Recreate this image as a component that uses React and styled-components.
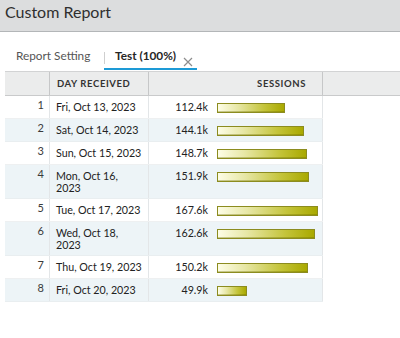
import React from "react";
import styled, { createGlobalStyle } from "styled-components";

const Global = createGlobalStyle`
  html, body { margin: 0; padding: 0; background: #ffffff; }
  body { font-family: Lato, "Open Sans", sans-serif; color: #333; }
  * { box-sizing: border-box; }
`;

const Page = styled.div`
  width: 400px;
  height: 338px;
  overflow: hidden;
  background: #fff;
`;

const TitleBar = styled.div`
  height: 32px;
  padding: 1px 0 0 5px;
  background: #dcddde;
  border-bottom: 1px solid #b3b6b8;
  font-size: 16px;
  line-height: 22px;
  color: #2f2f2f;
`;

const TabStrip = styled.div`
  display: flex;
  align-items: flex-start;
  padding: 16px 0 0 16px;
`;

const Tab = styled.div`
  display: flex;
  align-items: flex-start;
  height: 22px;
  width: ${(p) => (p.$width ? `${p.$width}px` : "auto")};
  padding-right: ${(p) => (p.$active ? "4px" : "0")};
  border-bottom: 2px solid ${(p) => (p.$active ? "#1d9ad6" : "transparent")};
  font-size: 11.8px;
  line-height: 16px;
  font-weight: ${(p) => (p.$active ? 700 : 400)};
  color: ${(p) => (p.$active ? "#262626" : "#555")};
  white-space: nowrap;
`;

const Divider = styled.span`
  width: 1px;
  height: 12px;
  margin: 4px 10px 0 0;
  background: #cfcfcf;
`;

const CloseIcon = styled.svg`
  margin: 9px 0 0 7px;
  flex: none;
`;

const Grid = styled.div`
  margin-top: 1px;
`;

const HeadRow = styled.div`
  display: flex;
  height: 25px;
  margin-left: 5px;
  background: #ebecec;
  border-top: 1px solid #d2d3d4;
  border-bottom: 1px solid #c9cacb;
`;

const HeadCell = styled.div`
  width: ${(p) => p.$w}px;
  flex: ${(p) => (p.$fill ? "1" : "none")};
  display: flex;
  align-items: center;
  justify-content: ${(p) => (p.$right ? "flex-end" : "flex-start")};
  padding: ${(p) => (p.$right ? "0 16px 0 0" : "0 0 0 7px")};
  border-right: ${(p) => (p.$fill ? "none" : "1px solid #c6c7c8")};
  font-size: 9.5px;
  font-weight: 700;
  letter-spacing: 0.6px;
  color: #333;
  white-space: nowrap;
`;

const Row = styled.div`
  display: flex;
  width: 318px;
  margin-left: 5px;
  background: ${(p) => (p.$alt ? "#edf4f7" : "#ffffff")};
  border-bottom: 1px solid ${(p) => (p.$alt ? "#e9eef0" : "#eef0f1")};
`;

const Cell = styled.div`
  flex: none;
  width: ${(p) => p.$w}px;
  border-right: 1px solid #e3e6e8;
  font-size: 10.7px;
  line-height: 11.5px;
  color: #222;
`;

const IndexCell = styled(Cell)`
  text-align: right;
  padding: 3px 5px 5px 0;
  font-size: 11px;
  color: #3a3a3a;
`;

const DateCell = styled(Cell)`
  padding: 5px 4px 5px 6px;
`;

const SessionCell = styled(Cell)`
  display: flex;
  align-items: flex-start;
  padding: 5px 0;
`;

const Value = styled.span`
  width: 59px;
  text-align: right;
  flex: none;
`;

const Bar = styled.span`
  display: block;
  height: 10px;
  margin: 2px 0 0 9px;
  border: 1px solid #8c8c1f;
  background: linear-gradient(to right, #fdfde6 0%, #e7e7a6 30%, #c4c43a 70%, #a9a900 100%);
  box-shadow: inset 0 -1px 0 rgba(110, 110, 0, 0.35);
`;

const rows = [
  ["1", "Fri, Oct 13, 2023", "112.4k", 112.4],
  ["2", "Sat, Oct 14, 2023", "144.1k", 144.1],
  ["3", "Sun, Oct 15, 2023", "148.7k", 148.7],
  ["4", "Mon, Oct 16, 2023", "151.9k", 151.9],
  ["5", "Tue, Oct 17, 2023", "167.6k", 167.6],
  ["6", "Wed, Oct 18, 2023", "162.6k", 162.6],
  ["7", "Thu, Oct 19, 2023", "150.2k", 150.2],
  ["8", "Fri, Oct 20, 2023", "49.9k", 49.9],
];

const MAX = 167.6;
const BAR_MAX = 101;

export default function App() {
  return (
    <Page>
      <Global />
      <TitleBar>Custom Report</TitleBar>
      <TabStrip>
        <Tab $width={88}>Report Setting</Tab>
        <Tab $active>
          <Divider />
          Test (100%)
          <CloseIcon width="10" height="10" viewBox="0 0 10 10">
            <path d="M1 1 L9 9 M9 1 L1 9" stroke="#8d8d8d" strokeWidth="1.2" fill="none" />
          </CloseIcon>
        </Tab>
      </TabStrip>
      <Grid>
        <HeadRow>
          <HeadCell $w={45} />
          <HeadCell $w={99}>DAY RECEIVED</HeadCell>
          <HeadCell $w={174} $right>SESSIONS</HeadCell>
          <HeadCell $fill />
        </HeadRow>
        {rows.map(([idx, date, label, v], i) => (
          <Row key={idx} $alt={i % 2 === 1}>
            <IndexCell $w={45}>{idx}</IndexCell>
            <DateCell $w={99}>{date}</DateCell>
            <SessionCell $w={174}>
              <Value>{label}</Value>
              <Bar style={{ width: `${Math.round((v / MAX) * BAR_MAX)}px` }} />
            </SessionCell>
          </Row>
        ))}
      </Grid>
    </Page>
  );
}
